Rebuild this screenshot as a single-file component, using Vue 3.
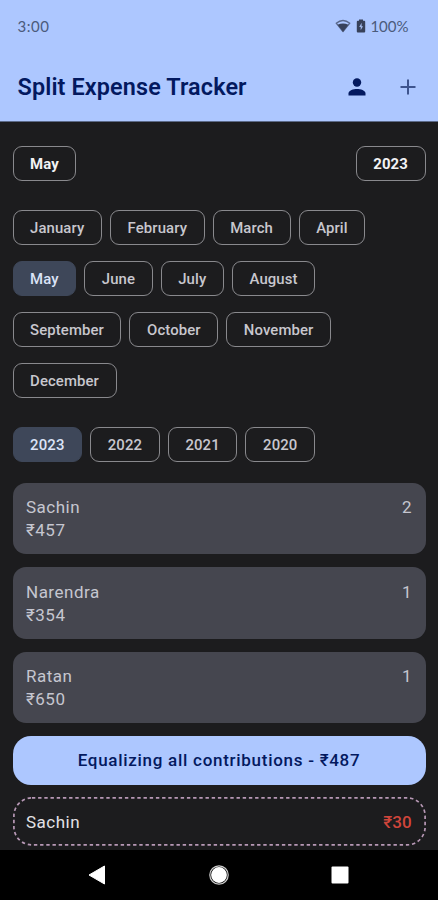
<script setup>
const monthRows = [
  ['January', 'February', 'March', 'April'],
  ['May', 'June', 'July', 'August'],
  ['September', 'October', 'November'],
  ['December'],
]
const years = ['2023', '2022', '2021', '2020']
const people = [
  { name: 'Sachin', amount: '₹457', count: 2 },
  { name: 'Narendra', amount: '₹354', count: 1 },
  { name: 'Ratan', amount: '₹650', count: 1 },
]
</script>

<template>
  <div class="screen">
    <header class="top">
      <div class="status">
        <span class="time">3:00</span>
        <div class="indicators">
          <svg class="wifi" width="16" height="14" viewBox="0 0 16 14">
            <path d="M1.2 4.2Q8 -1.2 14.8 4.2L8 12.6Z" fill="none" stroke="#58678a" stroke-width="1.3" stroke-linejoin="round" />
            <path d="M2.6 5.8Q8 3.2 13.4 5.8L8 12.8Z" fill="#37415a" />
          </svg>
          <svg class="battery" width="10" height="14" viewBox="0 0 10 14">
            <path d="M3 0.5h4v1.3h1.2q1 0 1 1v9.6q0 1-1 1H1.8q-1 0-1-1V2.8q0-1 1-1H3Z" fill="#37415a" />
            <path d="M5.6 3.8L3.2 8h1.5v3.2L7 7.2H5.6Z" fill="#a3bbed" />
          </svg>
          <span class="percent">100%</span>
        </div>
      </div>
      <div class="bar">
        <h1>Split Expense Tracker</h1>
        <div class="actions">
          <svg width="18" height="18" viewBox="0 0 18 18" fill="#03195f">
            <circle cx="9" cy="4.5" r="4.2" />
            <path d="M0.5 17.5v-2.1C0.5 12.5 5.5 11.1 9 11.1s8.5 1.4 8.5 4.3v2.1Z" />
          </svg>
          <svg width="16" height="16" viewBox="0 0 16 16" stroke="#3e548e" stroke-width="2">
            <path d="M8 0.5v15M0.5 8h15" />
          </svg>
        </div>
      </div>
    </header>

    <main>
      <div class="current">
        <span class="chip strong">May</span>
        <span class="chip strong">2023</span>
      </div>
      <div class="months">
        <div v-for="(row, i) in monthRows" :key="i" class="row">
          <span v-for="m in row" :key="m" class="chip" :class="{ selected: m === 'May' }">{{ m }}</span>
        </div>
      </div>
      <div class="row years">
        <span v-for="y in years" :key="y" class="chip" :class="{ selected: y === '2023' }">{{ y }}</span>
      </div>
      <div class="cards">
        <section v-for="p in people" :key="p.name" class="card">
          <div>
            <div>{{ p.name }}</div>
            <div>{{ p.amount }}</div>
          </div>
          <span>{{ p.count }}</span>
        </section>
      </div>
      <button class="equalize">Equalizing all contributions - ₹487</button>
      <div class="due">
        <svg class="outline" width="413" height="49" viewBox="0 0 413 49">
          <rect x="0.9" y="0.9" width="411.2" height="47" rx="18" fill="none" stroke="#b798b5" stroke-width="1.7" stroke-dasharray="3.4 2.8" />
        </svg>
        <span>Sachin</span>
        <span class="debt">₹30</span>
      </div>
    </main>

    <nav>
      <svg width="18" height="20" viewBox="0 0 18 20"><path d="M1 10L16.5 1v18Z" fill="#fff" stroke="#fff" stroke-linejoin="round" /></svg>
      <svg width="20" height="20" viewBox="0 0 20 20"><circle cx="10" cy="10" r="9.2" fill="none" stroke="#ccc" stroke-width="1.2" /><circle cx="10" cy="10" r="7.9" fill="#fff" /></svg>
      <svg width="18" height="18" viewBox="0 0 18 18"><rect x="0.5" y="0.5" width="17" height="17" rx="1" fill="#fff" /></svg>
    </nav>
  </div>
</template>

<style>
body {
  margin: 0;
  background: #1c1c1e;
}
</style>

<style scoped>
.screen {
  width: 438px;
  height: 900px;
  box-sizing: border-box;
  overflow: hidden;
  display: flex;
  flex-direction: column;
  background: #1c1c1e;
  font-family: Roboto, "Noto Sans", sans-serif;
}
.top {
  height: 122px;
  flex: none;
  box-sizing: border-box;
  background: #adc7ff;
  border-bottom: 1px solid #5c6a88;
}
.status {
  height: 52px;
  display: flex;
  align-items: center;
  justify-content: space-between;
  padding: 0 29.5px 0 17.5px;
  font-family: Lato, sans-serif;
  font-size: 15px;
  color: #4b5b7c;
}
.time {
  letter-spacing: 0.5px;
}
.indicators {
  display: flex;
  align-items: center;
}
.battery {
  margin: 0 4px 0 5px;
}
.bar {
  height: 70px;
  display: flex;
  align-items: center;
  justify-content: space-between;
  padding: 0 22px 0 17.5px;
}
h1 {
  margin: 0;
  font-size: 23.4px;
  font-weight: 600;
  line-height: 30px;
  letter-spacing: 0.13px;
  color: #03195f;
}
.actions {
  display: flex;
  align-items: center;
  gap: 34px;
  padding-bottom: 1px;
}
main {
  flex: 1;
  min-height: 0;
  padding: 24px 12.5px 0;
}
.current {
  display: flex;
  justify-content: space-between;
}
.months {
  display: grid;
  gap: 16px;
  margin-top: 29px;
}
.row {
  display: flex;
  gap: 8px;
}
.chip {
  box-sizing: border-box;
  height: 35px;
  line-height: 35px;
  padding: 0 16.6px;
  border: 1px solid #89898d;
  border-radius: 9px;
  font-size: 14.9px;
  font-weight: 550;
  letter-spacing: 0.1px;
  color: #c8c7ce;
}
.strong {
  font-weight: 700;
  color: #f2f2f4;
}
.selected {
  background: #3e4759;
  border-color: #3e4759;
  color: #dbe3f7;
}
.years {
  margin-top: 29px;
}
.years .chip {
  letter-spacing: 0.15px;
}
.cards {
  display: grid;
  gap: 13px;
  margin-top: 20.5px;
}
.card {
  box-sizing: border-box;
  height: 71.5px;
  display: flex;
  justify-content: space-between;
  padding: 13.5px 13.5px 0;
  border-radius: 13px;
  background: #45464f;
  color: #c5c6d0;
  font-size: 17px;
  line-height: 23px;
  letter-spacing: 0.5px;
}
.equalize {
  display: block;
  width: 100%;
  height: 49px;
  margin: 12.5px 0 12.5px;
  padding: 0;
  border: 0;
  border-radius: 18px;
  background: #adc7ff;
  color: #03195f;
  font-family: inherit;
  font-size: 17px;
  font-weight: 500;
  letter-spacing: 0.72px;
}
.due {
  position: relative;
  height: 49px;
  display: flex;
  align-items: center;
  justify-content: space-between;
  padding: 0 13.5px;
  font-size: 17px;
  letter-spacing: 0.5px;
  color: #e3e2e6;
}
.outline {
  position: absolute;
  inset: 0;
}
.debt {
  color: #d0453b;
  font-weight: 500;
  letter-spacing: 0.2px;
}
nav {
  height: 50px;
  flex: none;
  display: flex;
  align-items: center;
  justify-content: space-between;
  padding: 0 89px 0 88px;
  background: #000;
}
</style>
